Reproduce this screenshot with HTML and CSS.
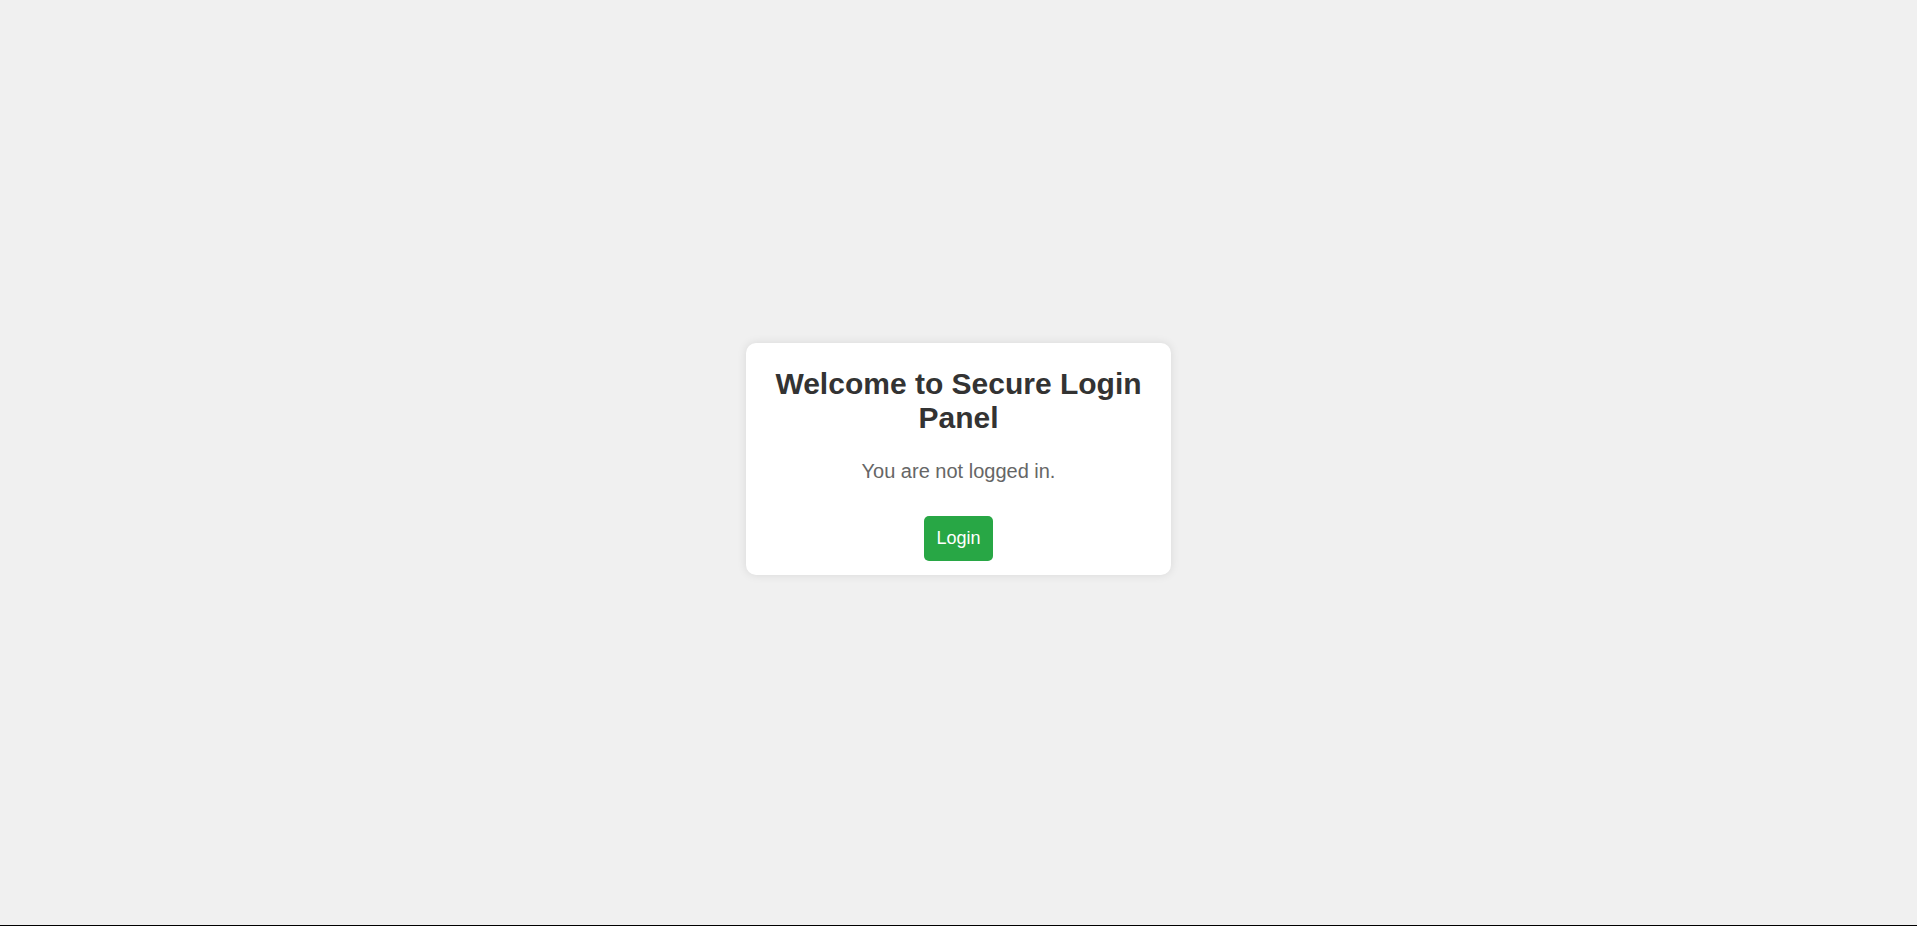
FILE: index.html
```html
<!DOCTYPE html>
<html lang="en">
<head>
<meta charset="utf-8">
<title>Secure Login Panel</title>
<link rel="stylesheet" href="styles.css">
</head>
<body>
<main class="page">
  <div class="card">
    <h1 class="title">Welcome to Secure Login Panel</h1>
    <p class="status">You are not logged in.</p>
    <button class="btn-login" type="button">Login</button>
  </div>
</main>
<div class="bottom-line"></div>
</body>
</html>
```

FILE: styles.css
```css
html, body {
  margin: 0;
  padding: 0;
}
body {
  background: #f0f0f0;
  font-family: "Liberation Sans", Arial, sans-serif;
  min-height: 100vh;
  display: flex;
  flex-direction: column;
}
.page {
  flex: 1;
  display: flex;
  align-items: center;
  justify-content: center;
  padding-bottom: 7px;
}
.card {
  box-sizing: border-box;
  width: 425px;
  background: #ffffff;
  border-radius: 10px;
  box-shadow: 0 0 10px rgba(0, 0, 0, 0.1);
  padding: 24px 20px 14px;
  text-align: center;
}
.title {
  margin: 0;
  font-size: 30px;
  font-weight: bold;
  color: #333333;
}
.status {
  margin: 25px 0 0;
  font-size: 20px;
  color: #666666;
}
.btn-login {
  margin-top: 33px;
  background: #28a745;
  color: #ffffff;
  border: none;
  border-radius: 5px;
  padding: 12px 12px;
  font-family: "Liberation Sans", Arial, sans-serif;
  font-size: 18px;
  cursor: pointer;
}
.bottom-line {
  height: 1px;
  background: #000000;
}
```
